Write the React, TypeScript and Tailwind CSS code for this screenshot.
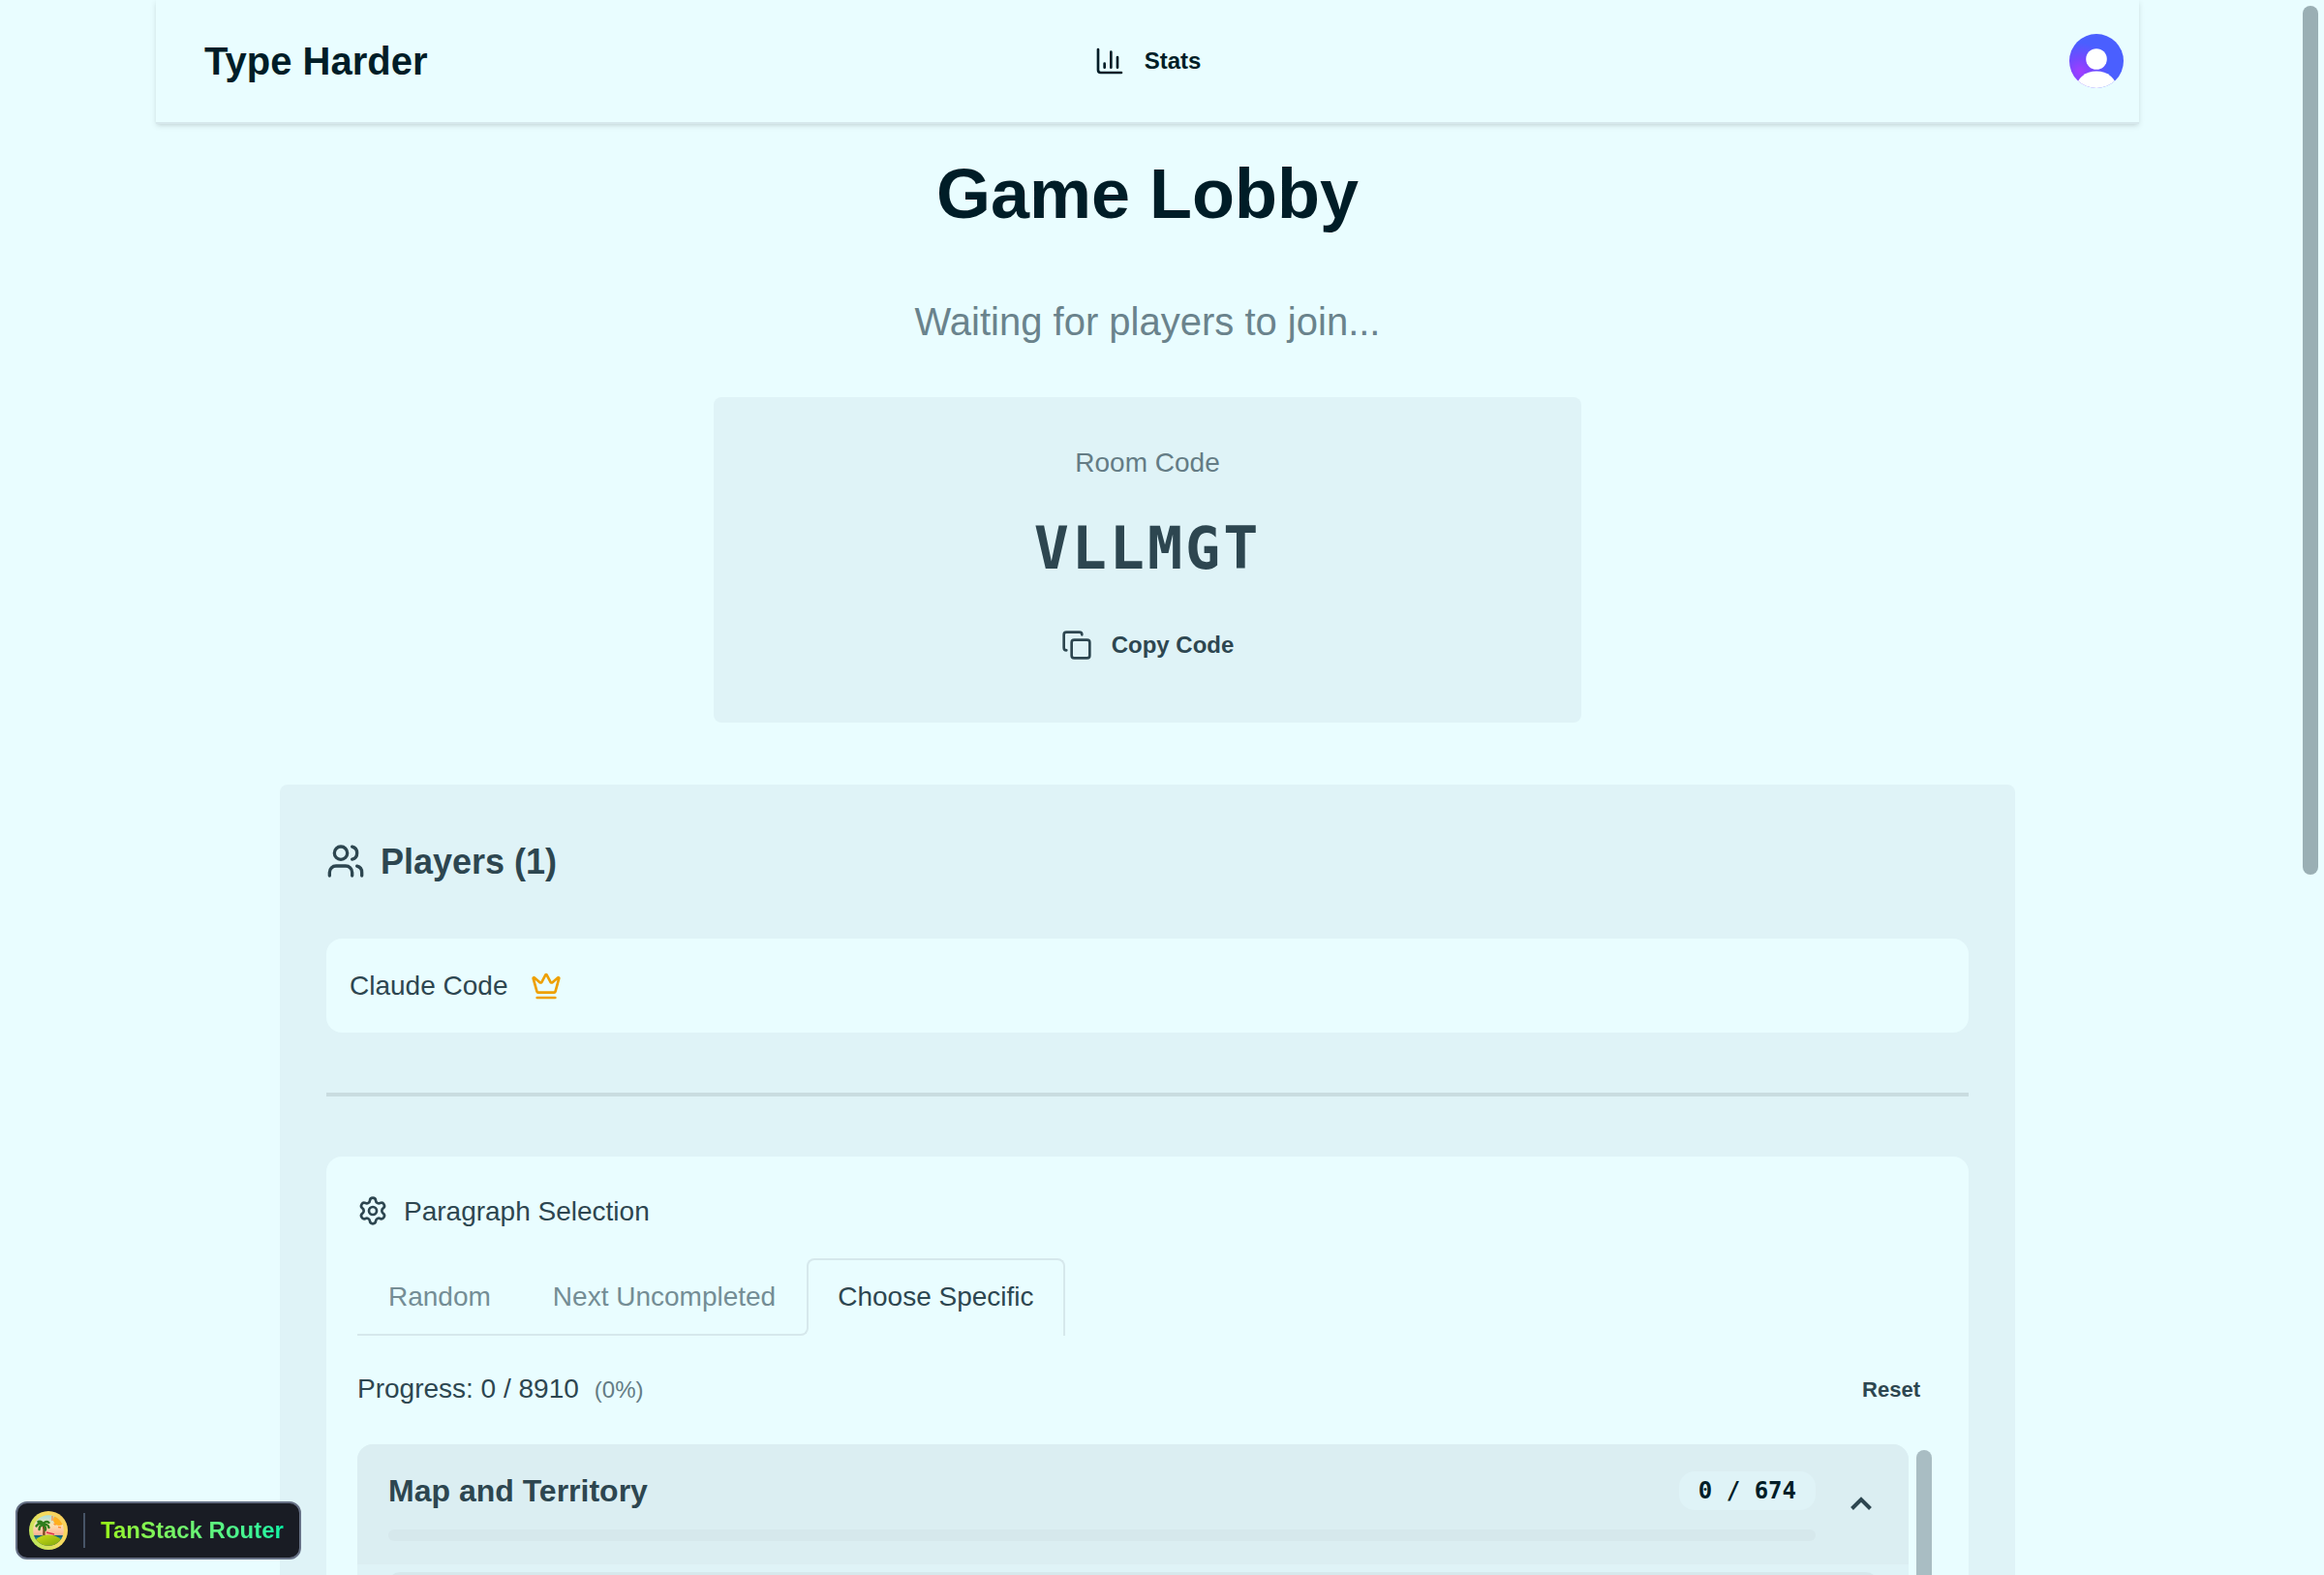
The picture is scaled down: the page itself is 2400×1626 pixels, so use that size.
import React from "react";
import { ChartColumn, Copy, Crown, Settings, Users } from "lucide-react";

function Avatar() {
  return (
    <svg className="size-14 rounded-full" viewBox="0 0 56 56">
      <defs>
        <radialGradient id="avatar" gradientUnits="userSpaceOnUse" cx="11" cy="39" r="30">
          <stop offset="0" stopColor="#a23dff" />
          <stop offset="0.45" stopColor="#7548ff" />
          <stop offset="1" stopColor="#4a5fff" />
        </radialGradient>
      </defs>
      <rect width="56" height="56" fill="url(#avatar)" />
      <circle cx="28" cy="26" r="10.8" fill="#fff" />
      <ellipse cx="28" cy="56" rx="21" ry="17.5" fill="#fff" />
    </svg>
  );
}

function IslandLogo() {
  return (
    <svg className="size-10 shrink-0" viewBox="0 0 40 40">
      <defs>
        <linearGradient id="ring" x1="0" y1="0.8" x2="1" y2="0.2">
          <stop offset="0" stopColor="#b5e85a" />
          <stop offset="0.55" stopColor="#f3dc60" />
          <stop offset="1" stopColor="#fbcf5c" />
        </linearGradient>
        <linearGradient id="sky" x1="0" y1="0" x2="0" y2="1">
          <stop offset="0" stopColor="#7fdcf0" />
          <stop offset="0.35" stopColor="#fbe3b4" />
          <stop offset="0.75" stopColor="#ff9a86" />
        </linearGradient>
        <linearGradient id="hill" x1="0" y1="0" x2="0.6" y2="1">
          <stop offset="0" stopColor="#d3e01a" />
          <stop offset="1" stopColor="#6f9c08" />
        </linearGradient>
        <clipPath id="disc">
          <circle cx="20" cy="20" r="15.8" />
        </clipPath>
      </defs>
      <circle cx="20" cy="20" r="20" fill="url(#ring)" />
      <g clipPath="url(#disc)">
        <rect width="40" height="40" fill="url(#sky)" />
        <circle cx="31" cy="9" r="6" fill="#ffb01f" />
        <path d="M24 5v5M25.5 13l2 1.500M30 16.500l3 .5" stroke="#ff8f3c" strokeWidth="1.300" fill="none" />
        <rect y="25" width="40" height="15" fill="#12677b" />
        <path d="M0 28h40" stroke="#2c9aa4" strokeWidth="1" />
        <path d="M18 22l8 2" stroke="#e0304f" strokeWidth="1.500" />
        <ellipse cx="20" cy="34.500" rx="15" ry="10" fill="url(#hill)" />
        <path d="M14.500 14c1.500 4 1.500 7 .8 11" stroke="#7c4a22" strokeWidth="2.400" fill="none" />
        <path
          d="M14.500 14C12 12 9.500 12.500 7.500 15.500M14.500 14c-2 .5-4 2.500-4 5M14.500 14c0-2-2-4-5-3M14.500 14c1-3 4-4 6-2M14.500 14c2-1 5.500 0 6 3M14.500 14c1.500 1 3 3 2.500 5.500"
          stroke="#2f7d1c"
          strokeWidth="2.400"
          strokeLinecap="round"
          fill="none"
        />
      </g>
    </svg>
  );
}

function Header() {
  return (
    <header className="grid h-32 w-full grid-cols-[1fr_auto_1fr] items-center border-b-2 border-[#d6e8ec] px-4 shadow-[0_2px_6px_0_rgba(0,0,0,0.1),0_2px_4px_-2px_rgba(0,0,0,0.1)]">
      <div className="pl-[34px] text-[40px] font-bold leading-[56px] text-[#001d27]">Type Harder</div>
      <div className="flex items-center gap-5 text-2xl font-bold text-[#001d27]">
        <ChartColumn size={32} />
        <span>Stats</span>
      </div>
      <div className="flex justify-end">
        <Avatar />
      </div>
    </header>
  );
}

function RoomCode() {
  return (
    <section className="mt-[50px] flex h-[336px] w-[896px] flex-col items-center gap-8 rounded-lg bg-[#dff3f7] p-12">
      <div className="h-10 text-[28px] leading-10 text-[#647c85]">Room Code</div>
      <div className="h-[72px] font-['DejaVu_Sans_Mono',monospace] text-[60px] font-bold leading-[72px] tracking-wider">
        VLLMGT
      </div>
      <button className="flex h-16 items-center gap-5 text-2xl font-bold">
        <Copy size={32} />
        Copy Code
      </button>
    </section>
  );
}

function Tabs() {
  return (
    <div className="mt-[29px] flex h-20 text-[28px] leading-[80px]">
      <div className="flex border-b-2 border-[#d6e8ec] text-[#748d95]">
        <div className="px-8">Random</div>
        <div className="px-8">Next Uncompleted</div>
      </div>
      <div className="relative rounded-t-lg border-x-2 border-t-2 border-[#d6e8ec] px-[30px] leading-[76px]">
        Choose Specific
        <span className="absolute -left-2 bottom-0 size-2 bg-[#e9fdff]">
          <span className="block size-2 rounded-br-lg border-b-2 border-r-2 border-[#d6e8ec]" />
        </span>
      </div>
    </div>
  );
}

function ParagraphList() {
  return (
    <div className="mt-[29px] flex h-[400px] justify-between pr-1.5">
      <div className="w-[1602px] overflow-hidden rounded-t-2xl bg-[#dff3f7]">
        <div className="flex h-[124px] bg-[#dbeef2] pl-8 pt-7">
          <div className="w-[1474px]">
            <div className="flex h-10 items-center justify-between">
              <h3 className="text-[32px] font-bold leading-10">Map and Territory</h3>
              <span className="flex h-10 items-center rounded-2xl bg-[#dff3f7] px-5 font-['DejaVu_Sans_Mono',monospace] text-2xl font-bold text-[#001d27]">
                0 / 674
              </span>
            </div>
            <div className="mt-5 h-3 rounded-full bg-[#d6e8ec]" />
          </div>
          <svg className="ml-9 mt-[26px] h-[14px] w-[22px]" viewBox="0 0 22 14" fill="none">
            <path d="M1.500 12.500L11 3l9.500 9.500" stroke="#2d4650" strokeWidth="4" />
          </svg>
        </div>
        <div className="mx-8 mt-2 h-20 rounded-xl bg-[#d6e8ec]" />
      </div>
      <div className="mt-1.5 h-[390px] w-4 rounded-full bg-[#a9bdc3]" />
    </div>
  );
}

function PlayersPanel() {
  return (
    <section className="mt-16 w-[1792px] rounded-t-lg bg-[#dff3f7] px-12 pt-[51px]">
      <h2 className="flex h-14 items-center gap-4 text-4xl font-bold">
        <Users size={40} />
        <span className="pt-0.5">Players (1)</span>
      </h2>
      <div className="mt-[52px] flex h-[97px] items-center gap-6 rounded-2xl bg-[#e9fdff] px-6 text-[28px]">
        Claude Code
        <Crown size={32} className="text-[#eea000]" />
      </div>
      <div className="mt-[62px] h-1 bg-[#c9dce0]" />
      <div className="mt-[62px] h-[760px] rounded-t-2xl bg-[#e9fdff] px-8 pt-9">
        <div className="flex h-10 items-center gap-4 text-[28px] leading-10">
          <Settings size={32} />
          <span className="pt-0.5">Paragraph Selection</span>
        </div>
        <Tabs />
        <div className="mt-[27px] flex h-14 items-center justify-between">
          <div className="text-[28px] leading-10">
            Progress: 0 / 8910<span className="ml-4 text-2xl text-[#647c85]">(0%)</span>
          </div>
          <button className="pr-[18px] text-[22px] font-bold">Reset</button>
        </div>
        <ParagraphList />
      </div>
    </section>
  );
}

export default function App() {
  return (
    <div className="relative flex h-[1626px] w-[2400px] overflow-hidden bg-[#e9fdff] font-['Liberation_Sans',Arial,sans-serif] text-[#2d4650]">
      <div className="flex w-[2370px] shrink-0 flex-col items-center">
        <div className="flex w-[2048px] flex-col items-center">
          <Header />
          <main className="flex flex-col items-center pt-8">
            <h1 className="text-7xl font-bold leading-[80px] text-[#001d27]">Game Lobby</h1>
            <p className="mt-16 text-[40px] leading-[56px] text-[#6a838c]">Waiting for players to join...</p>
            <RoomCode />
            <PlayersPanel />
          </main>
        </div>
      </div>
      <div className="ml-2 mt-1.5 h-[897px] w-4 rounded-full bg-[#9aafb4]" />

      <div className="absolute bottom-4 left-4 flex h-[60px] w-[295px] items-center rounded-xl border-2 border-[#667085] bg-[#191c24] pl-3">
        <IslandLogo />
        <div className="ml-4 h-9 w-0.5 bg-[#475467]" />
        <div className="ml-4 bg-linear-to-r from-[#98f30c] to-[#00f4a3] bg-clip-text text-2xl font-bold text-transparent">
          TanStack Router
        </div>
      </div>
    </div>
  );
}
